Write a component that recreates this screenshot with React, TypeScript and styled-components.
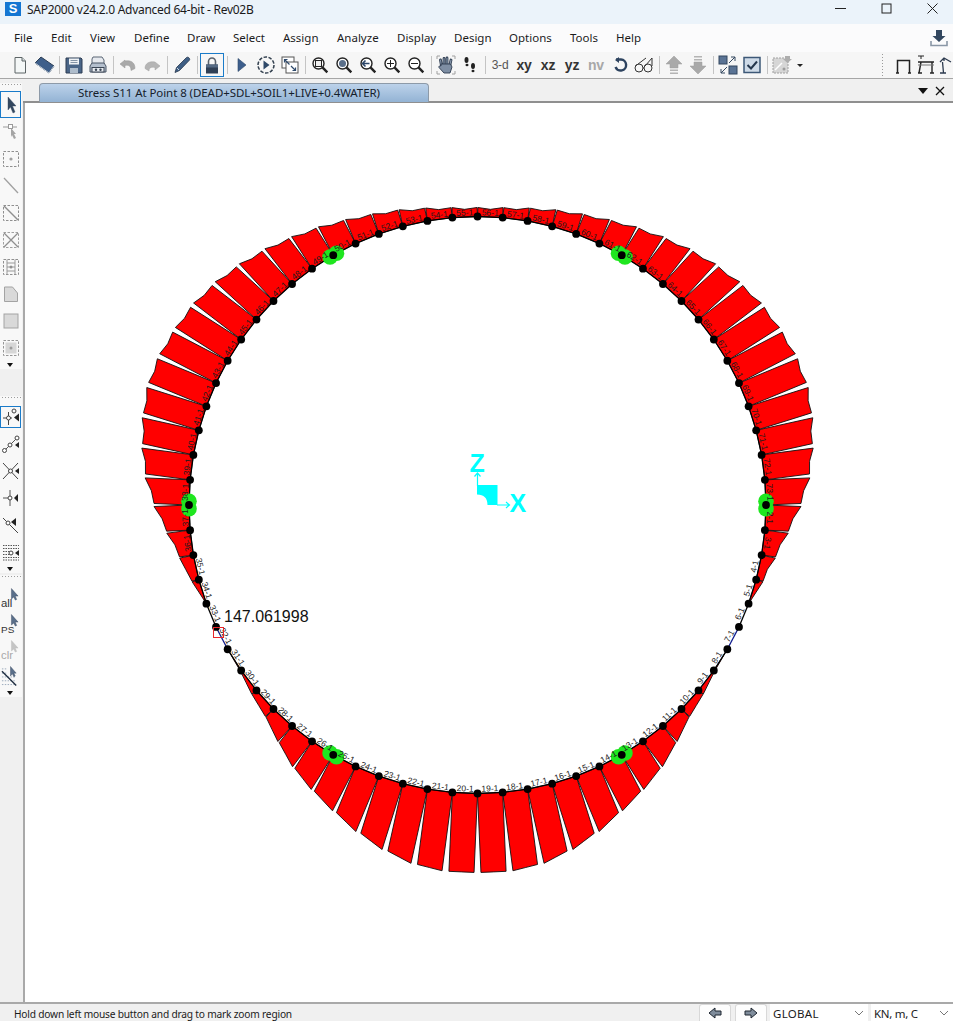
import React from "react";
import styled, { createGlobalStyle } from "styled-components";

const UI_FONT = `"Noto Sans", "Open Sans", sans-serif`;

const GlobalStyle = createGlobalStyle`
  html, body { margin: 0; padding: 0; background: #fff; }
  body { font-family: ${UI_FONT}; color: #111; }
  * { box-sizing: border-box; }
`;

const Window = styled.div`
  width: 953px;
  height: 1021px;
  display: flex;
  flex-direction: column;
  overflow: hidden;
  background: #f0f0f0;
`;

const TitleBar = styled.div`
  height: 24px;
  flex: none;
  display: flex;
  align-items: center;
  background: #ebf3fa;
  padding-left: 5px;
`;

const AppLogo = styled.div`
  width: 16px;
  height: 14px;
  margin-top: -6px;
  background: #1476d2;
  color: #fff;
  font: bold 13px/14px "Liberation Sans", sans-serif;
  text-align: center;
`;

const TitleText = styled.div`
  margin-left: 6px;
  margin-top: -5px;
  font-size: 12px;
  letter-spacing: -0.28px;
  color: #1a1a1a;
`;

const WindowButtons = styled.div`
  margin-left: auto;
  margin-top: -8px;
  margin-right: -2px;
  display: flex;
`;

const WindowButton = styled.div`
  width: 46px;
  height: 16px;
  display: flex;
  align-items: center;
  justify-content: center;
`;

const MenuBar = styled.div`
  height: 28px;
  flex: none;
  display: flex;
  align-items: center;
  padding-left: 14px;
  background: #fbfbfc;
`;

const MenuItem = styled.div<{ $w: number }>`
  width: ${(p) => p.$w}px;
  font-size: 11.5px;
  color: #1c1c1c;
  margin-top: -1px;
`;

const DownloadSlot = styled.div`
  margin-left: auto;
  margin-right: 5px;
  display: flex;
`;

const ToolRow = styled.div`
  height: 27px;
  flex: none;
  display: flex;
  align-items: center;
  padding-left: 8px;
  background: #f6f6f6;
  border-bottom: 1px solid #a6a6a6;
`;

const ToolButton = styled.div<{ $focus?: boolean }>`
  width: 24px;
  height: 24px;
  flex: none;
  display: flex;
  align-items: center;
  justify-content: center;
  border: 1px solid ${(p) => (p.$focus ? "#1a7bc9" : "transparent")};
`;

const ViewLabel = styled.span<{ $muted?: boolean; $thin?: boolean }>`
  font: ${(p) => (p.$thin ? "normal 12px" : "bold 14px")} "Liberation Sans", sans-serif;
  color: ${(p) => (p.$muted ? "#a8a8a8" : p.$thin ? "#555" : "#333")};
  letter-spacing: -0.2px;
`;

const ToolSep = styled.div`
  width: 6px;
  height: 18px;
  flex: none;
  display: flex;
  justify-content: center;
  &::after {
    content: "";
    width: 1px;
    background: #c4c4c4;
  }
`;

const DropCaret = styled.div`
  width: 12px;
  flex: none;
  display: flex;
  justify-content: center;
  &::after {
    content: "";
    border-left: 3px solid transparent;
    border-right: 3px solid transparent;
    border-top: 3px solid #222;
  }
`;

const Grip = styled.div`
  width: 4px;
  height: 25px;
  flex: none;
  margin-left: auto;
  margin-right: 8px;
  background-image: radial-gradient(#9a9a9a 0.8px, transparent 1px);
  background-size: 3px 3px;
`;

const FrameGap = styled.span<{ $w: number }>`
  width: ${(p) => p.$w}px;
  flex: none;
`;

const Body = styled.div`
  flex: 1;
  display: flex;
  min-height: 0;
`;

const SideBar = styled.div`
  width: 25px;
  flex: none;
  display: flex;
  flex-direction: column;
  background: #f0f0f0;
  border-right: 2px solid #a9a9a9;
`;

const SideGroup = styled.div<{ $top: number }>`
  margin-top: ${(p) => p.$top}px;
  width: 22px;
  background: #f8f8f8;
`;

const SideGrip = styled.div<{ $after: number }>`
  height: 4px;
  margin: 0 1px ${(p) => p.$after}px;
  background-image: radial-gradient(#9c9c9c 0.8px, transparent 1px);
  background-size: 3px 3px;
`;

const SideButton = styled.div<{ $focus?: boolean; $h: number; $gap?: number }>`
  width: 21px;
  height: ${(p) => p.$h}px;
  margin: ${(p) => p.$gap ?? 0}px 0;
  display: flex;
  align-items: center;
  justify-content: center;
  border: 1px solid ${(p) => (p.$focus ? "#1a7bc9" : "transparent")};
`;

const SideCaret = styled.div`
  height: 8px;
  display: flex;
  justify-content: center;
  align-items: center;
  padding-right: 2px;
  &::after {
    content: "";
    border-left: 3px solid transparent;
    border-right: 3px solid transparent;
    border-top: 4px solid #111;
  }
`;

const Main = styled.div`
  flex: 1;
  min-width: 0;
  display: flex;
  flex-direction: column;
`;

const TabStrip = styled.div`
  height: 24px;
  flex: none;
  display: flex;
  align-items: flex-end;
  padding: 0 8px 0 16px;
  background: #f0f0f0;
  border-bottom: 2px solid #8f8f8f;
  margin-left: -2px;
`;

const Tab = styled.div`
  width: 390px;
  height: 19px;
  margin-bottom: -1px;
  border: 1px solid #8d9aa8;
  border-bottom: none;
  border-radius: 4px 4px 0 0;
  background: linear-gradient(#bcd2ea, #93b3d4);
  padding-left: 38px;
  font-size: 11.5px;
  line-height: 17px;
  letter-spacing: -0.07px;
  color: #15202b;
  white-space: nowrap;
`;

const TabTools = styled.div`
  margin-left: auto;
  align-self: center;
  display: flex;
  align-items: center;
  gap: 7px;
  margin-top: 1px;
`;

const Canvas = styled.div`
  flex: 1;
  background: #fff;
  min-height: 0;
`;

const StatusBar = styled.div`
  height: 19px;
  flex: none;
  display: flex;
  align-items: center;
  background: #f0f0f0;
  border-top: 2px solid #a9a9a9;
  padding-left: 14px;
`;

const StatusText = styled.div`
  font-size: 10.2px;
  letter-spacing: -0.2px;
  color: #1b1b1b;
  margin-right: auto;
  margin-top: 2px;
`;

const ArrowButton = styled.div`
  width: 32px;
  height: 17px;
  margin-right: 4px;
  display: flex;
  align-items: center;
  justify-content: center;
  background: #fdfdfd;
  border: 1px solid #d8d8d8;
  border-bottom: none;
  border-radius: 3px 3px 0 0;
`;

const Combo = styled.div<{ $w: number }>`
  width: ${(p) => p.$w}px;
  height: 17px;
  margin-left: ${(p) => (p.$w > 90 ? "-1px" : "3px")};
  padding: 1px 0 0 3px;
  display: flex;
  align-items: center;
  justify-content: space-between;
  background: #fff;
  font: 11.5px ${UI_FONT};
  letter-spacing: ${(p) => (p.$w > 90 ? "0.3px" : "-0.3px")};
  color: #1b1b1b;
`;

const Chevron = () => (
  <svg width="10" height="6" viewBox="0 0 10 6" fill="none" stroke="#777" style={{ marginRight: 4 }}>
    <path d="M1 1l4 4 4-4" />
  </svg>
);

/* toolbar icons */
const Ico = ({ w = 18, h = 18, children }: { w?: number; h?: number; children: React.ReactNode }) => (
  <svg width={w} height={h} viewBox={`0 0 ${w} ${h}`} fill="none">
    {children}
  </svg>
);

const Magnifier = ({ fill, children }: { fill?: string; children?: React.ReactNode }) => (
  <Ico>
    <circle cx="7.5" cy="7.5" r="5.5" stroke="#222" strokeWidth="1.4" fill={fill ?? "#fff"} />
    <path d="M11.7 11.7l4.6 4.6" stroke="#222" strokeWidth="2.4" />
    {children}
  </Ico>
);

const toolbarIcons: Record<string, React.ReactNode> = {
  new: (
    <Ico>
      <path d="M4 1.5h7l3.5 3.5v12H4z" fill="#f4f7f7" stroke="#5c6466" />
      <path d="M11 1.5V5h3.5" stroke="#5c6466" fill="#d5dcdc" />
    </Ico>
  ),
  open: (
    <Ico w={22}>
      <path d="M2 7l6-6 13 9-5 7z" fill="#3f5f8a" stroke="#2c3e55" />
      <path d="M2 7l14 10 5-7" stroke="#c9d4e0" />
    </Ico>
  ),
  save: (
    <Ico>
      <path d="M1 2h15l1 1v14H1z" fill="#4a6587" stroke="#2d3d52" />
      <rect x="4" y="2.5" width="10" height="6" fill="#eef1f4" />
      <path d="M5.5 4.5h7M5.5 6.5h7" stroke="#8494a6" />
      <rect x="5" y="12" width="8" height="5" fill="#aebccb" />
    </Ico>
  ),
  print: (
    <Ico w={20}>
      <path d="M5 1h9l2 3v4H4V3z" fill="#e6e9ee" stroke="#5a6675" />
      <path d="M4 7l-2 3v6h16v-6l-2-3z" fill="#b4bfcd" stroke="#4a5666" />
      <rect x="4" y="11.5" width="12" height="4.5" fill="#e9edf2" stroke="#3c4756" />
      <circle cx="8" cy="13.7" r="1.2" fill="#3c4756" />
      <circle cx="12.5" cy="13.7" r="1.2" fill="#3c4756" />
    </Ico>
  ),
  undo: (
    <Ico>
      <path d="M6 4l-5 4 5 4V9.5c4-.8 6 .8 6 5l4-2c0-6-4-8.5-10-7.5z" fill="#a9a9a9" stroke="#969696" strokeWidth="0.5" />
    </Ico>
  ),
  redo: (
    <Ico>
      <path d="M12 6l5 4-5 4v-2.5c-4-.8-6 .2-6 3.5l-4-2.5c0-5 4-7.5 10-6.5z" fill="#b5b5b5" stroke="#a0a0a0" strokeWidth="0.5" />
    </Ico>
  ),
  pencil: (
    <Ico>
      <path d="M2 16.5l1.5-5L13.5 1.5c1-.8 2.5 0 3 1 .4.7.2 1.3-.2 1.8L6.5 14.5z" fill="#3f5f85" stroke="#24364c" strokeWidth="0.8" />
      <path d="M4 12l2 2" stroke="#c8d4e0" />
    </Ico>
  ),
  lock: (
    <Ico>
      <path d="M5.5 9V5.5a3.5 3.5 0 0 1 7 0V9" stroke="#59626c" strokeWidth="1.6" />
      <rect x="3" y="8.5" width="12" height="9" fill="#2f3f55" />
      <rect x="3" y="8.5" width="12" height="3" fill="#556a84" />
    </Ico>
  ),
  play: (
    <Ico>
      <path d="M5 2.5l8 6.5-8 6.5z" fill="#3d5e8c" stroke="#2e4868" strokeWidth="0.6" />
    </Ico>
  ),
  runDash: (
    <Ico w={20} h={20}>
      <circle cx="10" cy="10" r="8" stroke="#33404f" strokeWidth="1.5" strokeDasharray="3.5 1.5" />
      <path d="M7.5 5.5l6 4.5-6 4.5z" fill="#2e4868" />
    </Ico>
  ),
  zoomArrows: (
    <Ico>
      <rect x="1" y="1" width="12" height="11" fill="#fff" stroke="#555" />
      <rect x="5" y="6" width="12" height="11" fill="#fff" stroke="#555" />
      <path d="M3.5 3.5l5 5M3.5 6.5v-3h3M14.5 14.5L10 10M14.5 11.5v3h-3" stroke="#2f4a6c" strokeWidth="1.2" />
    </Ico>
  ),
  zoomRect: (
    <Magnifier>
      <rect x="4.5" y="4.5" width="6" height="6" fill="#eee" stroke="#222" />
    </Magnifier>
  ),
  zoomFull: (
    <Magnifier>
      <circle cx="7.5" cy="7.5" r="3.5" fill="#5a6f8a" />
    </Magnifier>
  ),
  zoomPrev: (
    <Magnifier>
      <path d="M3.5 7.5h7M6.5 4.5l-3 3 3 3" stroke="#2c4668" strokeWidth="1.6" />
    </Magnifier>
  ),
  zoomIn: (
    <Magnifier>
      <path d="M4 7.5h7M7.5 4v7" stroke="#222" />
    </Magnifier>
  ),
  zoomOut: (
    <Magnifier>
      <path d="M4 7.5h7" stroke="#222" />
    </Magnifier>
  ),
  hand: (
    <Ico w={20} h={20}>
      <path d="M1 1h3M16 1h3M1 19h3M16 19h3M1 1v3M19 1v3M1 16v3M19 16v3" stroke="#a0a0a0" />
      <path d="M5.5 11L4.5 5M8 9.5V3.5M11 9.5V3M13.8 10.5L15 5" stroke="#2c3a4e" strokeWidth="2.8" strokeLinecap="round" />
      <path d="M5.5 11L4.5 5M8 9.5V3.5M11 9.5V3M13.8 10.5L15 5" stroke="#8494a8" strokeWidth="1.2" strokeLinecap="round" />
      <path d="M5 9h9.5l1.5 3-2 6H8L3 12.5C2.5 11 4 10.5 5 11z" fill="#7e8ea3" stroke="#2c3a4e" strokeWidth="0.9" />
    </Ico>
  ),
  feet: (
    <Ico>
      <ellipse cx="5.5" cy="4" rx="2" ry="3" fill="#222" />
      <ellipse cx="6" cy="9" rx="1.5" ry="1.3" fill="#222" />
      <ellipse cx="12" cy="10" rx="2" ry="3" fill="#222" />
      <ellipse cx="12" cy="15" rx="1.5" ry="1.3" fill="#222" />
    </Ico>
  ),
  rotate: (
    <Ico>
      <path d="M5 3.5h5a5.5 5.5 0 1 1-5.5 7.5" stroke="#2d435f" strokeWidth="2.4" />
      <path d="M8 1v6L4 4z" fill="#2d435f" />
    </Ico>
  ),
  glasses: (
    <Ico w={20}>
      <circle cx="5" cy="12" r="4" stroke="#333" />
      <circle cx="14" cy="12" r="4" stroke="#333" />
      <path d="M9 12h1M1.5 10L12 2M11 10l7-8v8" stroke="#333" />
    </Ico>
  ),
  up: (
    <Ico w={20} h={20}>
      <path d="M10 1l8 8h-4v4H6V9H2z" fill="#a9a9a9" stroke="#9d9d9d" strokeWidth="0.5" />
      <path d="M6 14.5h8V16H6zM6 17.5h8V19H6z" fill="#b4b4b4" />
    </Ico>
  ),
  down: (
    <Ico w={20} h={20}>
      <path d="M10 19l8-8h-4V7H6v4H2z" fill="#a9a9a9" stroke="#9d9d9d" strokeWidth="0.5" />
      <path d="M6 1h8v1.5H6zM6 4h8v1.5H6z" fill="#b4b4b4" />
    </Ico>
  ),
  gridArrows: (
    <Ico w={20} h={20}>
      <rect x="1" y="1" width="8" height="8" fill="#5a7394" stroke="#33475f" />
      <rect x="11" y="11" width="8" height="8" fill="#5a7394" stroke="#33475f" />
      <path d="M11 8l6-6M13 2h4v4M9 12l-6 6M3 14v4h4" stroke="#33475f" />
    </Ico>
  ),
  check: (
    <Ico>
      <rect x="1" y="1.5" width="16" height="15" fill="#cfdbe8" stroke="#3d5877" strokeWidth="1.5" />
      <path d="M4.5 9L8 12.5l6-7" stroke="#25374d" strokeWidth="2" />
    </Ico>
  ),
  disabled: (
    <Ico w={20} h={20}>
      <rect x="1" y="3" width="15" height="15" fill="#d6d6d6" stroke="#a0a0a0" strokeDasharray="2 1" />
      <path d="M3 15l7-7" stroke="#fff" strokeWidth="1.5" />
      <circle cx="12" cy="14" r="1.5" fill="#9c9c9c" />
      <path d="M13 1h5v3h2l-4.500 4L11 4h2z" fill="#adadad" />
    </Ico>
  ),
  frame1: (
    <Ico w={20} h={20}>
      <path d="M3 18h3M15 18h3M4.5 18V5.5h12V18" stroke="#222" strokeWidth="1.5" />
    </Ico>
  ),
  frame2: (
    <Ico w={20} h={22}>
      <path d="M1 2h6M4 2v3" stroke="#222" />
      <path d="M1 8h16M4 8L2 19M15 8v11M1 19h4M13 19h4" stroke="#222" strokeWidth="1.4" />
      <path d="M1 11h16" stroke="#777" />
    </Ico>
  ),
  frame3: (
    <Ico w={14} h={22}>
      <path d="M1 8l4-4 7 4M5 4v3M3.5 8l1 11M1 19h6" stroke="#2c3a4e" strokeWidth="1.3" />
    </Ico>
  ),
};

const mainTools: (string | null)[] = [
  "new", "open", null, "save", "print", null, "undo", "redo", null, "pencil", null, "lock", null,
  "play", "runDash", "zoomArrows", null, "zoomRect", "zoomFull", "zoomPrev", "zoomIn", "zoomOut", null,
  "hand", "feet", null,
];

/* side toolbar icons */
const SideArrow = ({ color = "#33475f" }: { color?: string }) => (
  <path d="M6 1l8 9h-3.5l2.5 6-2 1-2.5-6L6 14z" fill={color} stroke={color} strokeWidth="0.4" />
);

const Dash = "2.5 1.5";

const sideIconsTop: React.ReactNode[] = [
  <Ico key="a"><SideArrow /></Ico>,
  <Ico key="b">
    <path d="M1 4h14" stroke="#9a9a9a" />
    <rect x="6.5" y="1.5" width="4" height="4" fill="#fff" stroke="#9a9a9a" />
    <path d="M9 5l5 6h-2l2 4-2 1-2-4-1 2z" fill="#a5a5a5" />
  </Ico>,
  <Ico key="c">
    <rect x="1.5" y="1.5" width="15" height="15" stroke="#8f8f8f" strokeDasharray={Dash} />
    <circle cx="9" cy="9" r="1.6" fill="#a0a0a0" />
  </Ico>,
  <Ico key="d"><path d="M2 1l14 15" stroke="#a0a0a0" strokeWidth="1.3" /></Ico>,
  <Ico key="e">
    <rect x="1.5" y="1.5" width="15" height="15" stroke="#8f8f8f" strokeDasharray={Dash} />
    <path d="M2 2l14 14" stroke="#8f8f8f" strokeWidth="1.4" />
  </Ico>,
  <Ico key="f">
    <rect x="1.5" y="1.5" width="15" height="15" stroke="#a0a0a0" strokeDasharray={Dash} />
    <path d="M2 2l14 14M16 2L2 16" stroke="#8f8f8f" strokeWidth="1.3" />
  </Ico>,
  <Ico key="g">
    <rect x="1.5" y="1.5" width="15" height="15" stroke="#8f8f8f" strokeDasharray={Dash} />
    <path d="M5 1.5v15M13 1.5v15M5 5h8M5 9h8M5 13h8" stroke="#9a9a9a" />
    <circle cx="9" cy="9" r="1.5" fill="#909090" />
  </Ico>,
  <Ico key="h"><path d="M2.5 2h8l5 6v8.5H2.5z" fill="#d9d9d9" stroke="#a3a3a3" /></Ico>,
  <Ico key="i"><rect x="2" y="2" width="14" height="14" fill="#d9d9d9" stroke="#a3a3a3" /></Ico>,
  <Ico key="j">
    <rect x="1.5" y="1.5" width="15" height="15" stroke="#969696" strokeDasharray={Dash} />
    <rect x="3.5" y="3.5" width="11" height="11" fill="#d6d6d6" />
    <circle cx="9" cy="9" r="1.5" fill="#9b9b9b" />
  </Ico>,
];

const SideLabelArrow = ({ label, color = "#333" }: { label: string; color?: string }) => (
  <svg width="20" height="22" viewBox="0 0 20 22" fill="none">
    <path d="M11 1l7 8h-3l1.500 3.500-1.500.7L13.500 10 11 12z" fill={color === "#333" ? "#5a6f8a" : "#c4c4c4"} stroke={color === "#333" ? "#2c3e55" : "#b8b8b8"} strokeWidth="0.4" />
    <text x="0" y="20" fontFamily="Liberation Sans, sans-serif" fontSize={label === "PS" ? 10.5 : 12} fill={color}>
      {label}
    </text>
  </svg>
);

const sideIconsMid: React.ReactNode[] = [
  <Ico key="a">
    <path d="M6.5 4v13M1 10h9" stroke="#444" />
    <circle cx="12" cy="3" r="2" stroke="#444" />
    <circle cx="6.5" cy="10" r="2" fill="#fff" stroke="#444" />
    <path d="M17 5.5l-5 4 5 4z" fill="#222" />
  </Ico>,
  <Ico key="b">
    <path d="M2 16L16 2" stroke="#555" />
    <circle cx="15" cy="3" r="2" fill="#fff" stroke="#444" />
    <circle cx="8" cy="10" r="2" fill="#fff" stroke="#444" />
    <circle cx="2.5" cy="15.5" r="2" fill="#fff" stroke="#444" />
    <path d="M17 7l-4 3 4 3z" fill="#222" />
  </Ico>,
  <Ico key="c">
    <path d="M1 1l15 16M16 1L1 17" stroke="#444" />
    <circle cx="8.5" cy="9" r="2" fill="#fff" stroke="#444" />
    <path d="M17 6l-4 3 4 3z" fill="#222" />
  </Ico>,
  <Ico key="d">
    <path d="M8 1v16M1 9h5" stroke="#555" />
    <circle cx="8" cy="9" r="2" fill="#fff" stroke="#444" />
    <path d="M16 5l-4 4 4 4z" fill="#222" />
  </Ico>,
  <Ico key="e">
    <path d="M1 2l15 15" stroke="#444" />
    <circle cx="6" cy="7" r="2" fill="#fff" stroke="#444" />
    <path d="M14 2L9 6l5 4z" fill="#222" />
  </Ico>,
  <Ico key="f">
    <path d="M1 2.5h16M1 5.5h16M1 8.5h9M1 11.5h9M1 14.5h16M1 17h16" stroke="#555" strokeDasharray="1.5 1" />
    <circle cx="9" cy="10" r="2" fill="#fff" stroke="#444" />
    <path d="M17 7l-4 3 4 3z" fill="#222" />
  </Ico>,
];

const sideIconsLow: React.ReactNode[] = [
  <SideLabelArrow key="a" label="all" />,
  <SideLabelArrow key="b" label="PS" />,
  <SideLabelArrow key="c" label="clr" color="#a8a8a8" />,
  <svg key="d" width="20" height="22" viewBox="0 0 20 22" fill="none">
    <path d="M1 3.5h6M1 8h6M1 12h14M1 16h14M1 20h14" stroke="#98a8bb" strokeDasharray="1.5 1.5" />
    <path d="M1 6l15 15" stroke="#1e2c3e" strokeWidth="1.4" />
    <path d="M10 1l6 7h-2.5l1.5 3-1.500.7-1.500-3L10 11z" fill="#5a6f8a" stroke="#2c3e55" strokeWidth="0.4" />
  </svg>,
];

const menuItems: [string, number][] = [
  ["File", 37], ["Edit", 39], ["View", 44], ["Define", 53], ["Draw", 46], ["Select", 50], ["Assign", 54],
  ["Analyze", 60], ["Display", 57], ["Design", 55], ["Options", 61], ["Tools", 46], ["Help", 40],
];

/* structural diagram: 72 frame elements on a circle */
const CX = 477.5;
const CY = 505;
const R = 288.5;

// outer height by angle from the bottom of the ring (0 = bottom, 180 = top)
const HEIGHT: Record<number, number> = {
  0: 79, 5: 79, 10: 76, 15: 69, 20: 60, 25: 50, 30: 41, 35: 32, 40: 21, 45: 11, 50: 6, 55: 1,
  60: 0, 65: 0, 70: 0, 75: 7, 80: 14, 85: 23.5, 90: 35, 95: 45, 100: 52, 105: 58, 110: 62.5,
  115: 63.5, 120: 62, 125: 60, 130: 56, 135: 50.5, 140: 44.5, 145: 38, 150: 32, 155: 26,
  160: 21, 165: 17, 170: 13, 175: 10, 180: 9,
};

const rad = (d: number) => (d * Math.PI) / 180;
const nodeAt = (deg: number) => ({ x: CX + R * Math.cos(rad(deg)), y: CY + R * Math.sin(rad(deg)) });
const phiOf = (deg: number) => {
  const a = Math.abs(((deg - 90 + 540) % 360) - 180);
  return Math.round(a / 5) * 5;
};

const elements = Array.from({ length: 72 }, (_, i) => {
  const k = i + 2;
  const a0 = i * 5;
  const a1 = a0 + 5;
  const mid = a0 + 2.5;
  const p0 = nodeAt(a0);
  const p1 = nodeAt(a1);
  const nx = Math.cos(rad(mid));
  const ny = Math.sin(rad(mid));
  const h0 = HEIGHT[phiOf(a0)];
  const h1 = HEIGHT[phiOf(a1)];
  const upper = phiOf(a0) >= 70 && phiOf(a1) >= 70;
  const dent = upper && h0 > 8 ? 1.8 : 0;
  const hm = (h0 + h1) / 2 - dent;
  const pm = { x: (p0.x + p1.x) / 2, y: (p0.y + p1.y) / 2 };
  const q0 = `${p0.x + nx * h0},${p0.y + ny * h0}`;
  const qm = `${pm.x + nx * hm},${pm.y + ny * hm}`;
  const q1 = `${p1.x + nx * h1},${p1.y + ny * h1}`;
  const poly = `${p0.x},${p0.y} ${q0} ${qm} ${q1} ${p1.x},${p1.y}`;

  // label sits above the element, reading upright
  const m = mid > 270 ? mid - 360 : mid;
  const inside = m > 10 && m < 170;
  const rotation = inside ? mid - 90 : m < 10 ? m + 90 : mid - 270;
  const off = inside ? -4.5 : 4.5;
  return {
    k,
    p0,
    p1,
    poly,
    filled: h0 + h1 > 0,
    blue: k === 32 || k === 7,
    label: { x: pm.x + nx * off, y: pm.y + ny * off, rotation },
  };
});

const greenSpots = [30, 90, 150, 210, 270, 330].map((phi) => {
  const deg = 90 + phi;
  const n = nodeAt(deg);
  const tx = -Math.sin(rad(deg));
  const ty = Math.cos(rad(deg));
  return { n, tx, ty };
});

const Diagram = styled.svg`
  display: block;
`;

const StressDiagram = () => (
  // viewBox in page coordinates, the canvas starts at (25, 103)
  <Diagram width="928" height="899" viewBox="25 103 928 899">
    {elements.map((e) =>
      e.filled ? <polygon key={e.k} points={e.poly} fill="#ff0000" stroke="#111" strokeWidth="0.9" /> : null
    )}
    {elements.map((e) => (
      <line
        key={e.k}
        x1={e.p0.x}
        y1={e.p0.y}
        x2={e.p1.x}
        y2={e.p1.y}
        stroke={e.blue ? "#101a8c" : "#000"}
        strokeWidth="1.3"
      />
    ))}
    {greenSpots.map((s, i) => (
      <g key={i} fill="#1fe61f">
        <circle cx={s.n.x + s.tx * 3.7} cy={s.n.y + s.ty * 3.7} r="7.8" />
        <circle cx={s.n.x - s.tx * 3.7} cy={s.n.y - s.ty * 3.7} r="7.8" />
      </g>
    ))}
    {elements.map((e) => (
      <text
        key={e.k}
        x={e.label.x}
        y={e.label.y}
        transform={`rotate(${e.label.rotation} ${e.label.x} ${e.label.y})`}
        textAnchor="middle"
        dominantBaseline="central"
        fontFamily="Liberation Sans, sans-serif"
        fontSize="8.5"
        fill="#1c1c1c"
      >
        {e.k}-1
      </text>
    ))}
    {elements.map((e) => (
      <circle key={e.k} cx={e.p0.x} cy={e.p0.y} r="3.9" fill="#000" />
    ))}
    <rect x="213.5" y="627.5" width="10" height="10" fill="none" stroke="#e8262a" />
    <text x="224" y="622" fontFamily="Liberation Sans, sans-serif" fontSize="16" fill="#111">
      147.061998
    </text>
    {/* global axes */}
    <path d="M477 485h20.5v20h-10c0-7-3.5-10.5-10.5-10.5z" fill="#00ffff" />
    <path d="M477.5 486v-12.5M474.5 476.5l3-3.5 3 3.5M497 505h12.5M506 502l3.5 3-3.5 3" stroke="#00ffff" strokeWidth="1.2" fill="none" />
    <text x="469.5" y="472" fontFamily="Liberation Sans, sans-serif" fontWeight="bold" fontSize="25" fill="#00ffff">
      Z
    </text>
    <text x="509.5" y="512" fontFamily="Liberation Sans, sans-serif" fontWeight="bold" fontSize="25" fill="#00ffff">
      X
    </text>
  </Diagram>
);

const Arrow = ({ flip }: { flip?: boolean }) => (
  <svg width="14" height="12" viewBox="0 0 14 12" style={{ transform: flip ? "scaleX(-1)" : undefined }}>
    <path d="M1 6l6-5v3h6v4H7v3z" fill="#7f8c9b" stroke="#1e2630" />
  </svg>
);

export default function App() {
  return (
    <>
      <GlobalStyle />
      <Window>
        <TitleBar>
          <AppLogo>S</AppLogo>
          <TitleText>SAP2000 v24.2.0 Advanced 64-bit - Rev02B</TitleText>
          <WindowButtons>
            <WindowButton>
              <svg width="11" height="11" viewBox="0 0 11 11"><path d="M0 5.5h11" stroke="#222" /></svg>
            </WindowButton>
            <WindowButton>
              <svg width="11" height="11" viewBox="0 0 11 11"><rect x="1" y="1" width="9" height="9" fill="none" stroke="#222" /></svg>
            </WindowButton>
            <WindowButton>
              <svg width="11" height="11" viewBox="0 0 11 11"><path d="M.5.5l10 10M10.5.5l-10 10" stroke="#222" /></svg>
            </WindowButton>
          </WindowButtons>
        </TitleBar>

        <MenuBar>
          {menuItems.map(([name, w]) => (
            <MenuItem key={name} $w={w}>{name}</MenuItem>
          ))}
          <DownloadSlot>
            <svg width="18" height="18" viewBox="0 0 18 18">
              <path d="M6 1h6v6h3.5L9 13 2.5 7H6z" fill="#33475f" />
              <path d="M1 12v4.5h16V12" fill="none" stroke="#8a97a6" strokeWidth="1.6" />
            </svg>
          </DownloadSlot>
        </MenuBar>

        <ToolRow>
          {mainTools.map((t, i) =>
            t ? (
              <ToolButton key={i} $focus={t === "lock"}>{toolbarIcons[t]}</ToolButton>
            ) : (
              <ToolSep key={i} />
            )
          )}
          <ToolButton><ViewLabel $thin>3-d</ViewLabel></ToolButton>
          <ToolButton><ViewLabel>xy</ViewLabel></ToolButton>
          <ToolButton><ViewLabel>xz</ViewLabel></ToolButton>
          <ToolButton><ViewLabel>yz</ViewLabel></ToolButton>
          <ToolButton><ViewLabel $muted>nv</ViewLabel></ToolButton>
          <ToolButton>{toolbarIcons.rotate}</ToolButton>
          <ToolButton>{toolbarIcons.glasses}</ToolButton>
          <ToolSep />
          <ToolButton>{toolbarIcons.up}</ToolButton>
          <ToolButton>{toolbarIcons.down}</ToolButton>
          <ToolSep />
          <ToolButton>{toolbarIcons.gridArrows}</ToolButton>
          <ToolButton>{toolbarIcons.check}</ToolButton>
          <ToolSep />
          <ToolButton>{toolbarIcons.disabled}</ToolButton>
          <DropCaret />
          <Grip />
          {toolbarIcons.frame1}
          <FrameGap $w={4} />
          {toolbarIcons.frame2}
          <FrameGap $w={2} />
          {toolbarIcons.frame3}
        </ToolRow>

        <Body>
          <SideBar>
            <SideGroup $top={4}>
              <SideGrip $after={4} />
              {sideIconsTop.map((icon, i) => (
                <SideButton key={i} $h={27} $focus={i === 0}>{icon}</SideButton>
              ))}
              <SideCaret />
            </SideGroup>
            <SideGroup $top={27}>
              <SideGrip $after={6} />
              {sideIconsMid.map((icon, i) =>
                i === 0 ? (
                  <SideButton key={i} $h={22} $gap={2} $focus>{icon}</SideButton>
                ) : (
                  <SideButton key={i} $h={27}>{icon}</SideButton>
                )
              )}
              <SideCaret />
            </SideGroup>
            <SideGroup $top={2}>
              <SideGrip $after={6} />
              {sideIconsLow.map((icon, i) => (
                <SideButton key={i} $h={26}>{icon}</SideButton>
              ))}
              <SideCaret />
            </SideGroup>
          </SideBar>
          <Main>
            <TabStrip>
              <Tab>Stress S11 At Point 8 (DEAD+SDL+SOIL1+LIVE+0.4WATER)</Tab>
              <TabTools>
                <svg width="10" height="6" viewBox="0 0 10 6"><path d="M0 0h10L5 6z" fill="#111" /></svg>
                <svg width="10" height="10" viewBox="0 0 10 10"><path d="M1 1l8 8M9 1L1 9" stroke="#111" strokeWidth="1.3" /></svg>
              </TabTools>
            </TabStrip>
            <Canvas>
              <StressDiagram />
            </Canvas>
          </Main>
        </Body>

        <StatusBar>
          <StatusText>Hold down left mouse button and drag to mark zoom region</StatusText>
          <ArrowButton><Arrow /></ArrowButton>
          <ArrowButton><Arrow flip /></ArrowButton>
          <Combo $w={98}>GLOBAL<Chevron /></Combo>
          <Combo $w={82}>KN, m, C<Chevron /></Combo>
        </StatusBar>
      </Window>
    </>
  );
}
